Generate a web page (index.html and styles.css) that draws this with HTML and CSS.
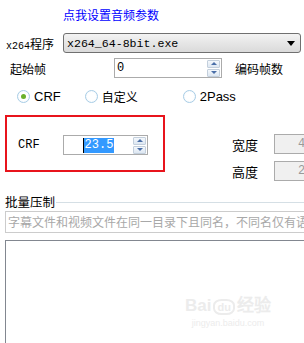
FILE: index.html
```html
<!DOCTYPE html>
<html lang="zh-CN">
<head>
    <meta charset="UTF-8">
    <meta name="viewport" content="width=device-width, initial-scale=1.0">
    <title>x264 压制设置</title>
    <link rel="stylesheet" href="styles.css">
</head>
<body>
    <div class="panel">
        <div class="row link-row">
            <a class="audio-link" href="#">点我设置音频参数</a>
        </div>

        <div class="row exe-row">
            <span class="label exe-label"><span class="mono">x264</span>程序</span>
            <div class="select">
                <span class="select-text">x264_64-8bit.exe</span>
                <span class="arrow"></span>
            </div>
        </div>

        <div class="row frame-row">
            <span class="label start-label">起始帧</span>
            <div class="spin frame-spin">
                <span class="spin-value">0</span>
                <div class="spin-btns">
                    <span class="spin-btn up"></span>
                    <span class="spin-btn down"></span>
                </div>
            </div>
            <span class="label count-label">编码帧数</span>
        </div>

        <div class="row mode-row">
            <label class="radio radio-crf"><span class="dot checked"></span>CRF</label>
            <label class="radio radio-custom"><span class="dot"></span>自定义</label>
            <label class="radio radio-pass"><span class="dot"></span>2Pass</label>
        </div>

        <div class="row crf-row">
            <div class="crf-box">
                <span class="crf-label">CRF</span>
                <div class="spin crf-spin">
                    <span class="spin-value center"><span class="selected">23.5</span></span>
                    <div class="spin-btns">
                        <span class="spin-btn up"></span>
                        <span class="spin-btn down"></span>
                    </div>
                </div>
            </div>
            <div class="size-col">
                <div class="size-row">
                    <span class="size-label">宽度</span>
                    <span class="size-box">4</span>
                </div>
                <div class="size-row">
                    <span class="size-label">高度</span>
                    <span class="size-box">2</span>
                </div>
            </div>
        </div>

        <div class="group-title">
            <span>批量压制</span>
            <span class="group-line"></span>
        </div>

        <div class="hint-input">字幕文件和视频文件在同一目录下且同名，不同名仅有语</div>

        <div class="list-box"></div>

        <div class="watermark">
            <div class="wm-top">Bai<span class="wm-du">du</span>经验</div>
            <div class="wm-url">jingyan.baidu.com</div>
        </div>
    </div>
</body>
</html>
```

FILE: styles.css
```css
* {
    margin: 0;
    padding: 0;
    box-sizing: border-box;
}

body {
    font-family: "Noto Sans CJK SC", "DejaVu Sans", sans-serif;
    font-size: 12px;
    color: #000;
    background: #fff;
    overflow: hidden;
}

.panel {
    position: relative;
    padding-top: 8px;
    width: 304px;
    height: 343px;
    overflow: hidden;
}

.row {
    display: flex;
    align-items: center;
    white-space: nowrap;
}

.row > * {
    flex-shrink: 0;
}

.mono {
    font-family: "Liberation Mono", monospace;
    font-size: 10px;
}

/* top link */
.link-row {
    height: 14px;
    padding-left: 63px;
    line-height: 14px;
}

.audio-link {
    color: #0000ff;
    text-decoration: none;
}

/* x264 exe select */
.exe-row {
    margin-top: 11px;
    height: 20px;
}

.exe-label {
    width: 63px;
    padding-left: 6px;
}

.select {
    width: 238px;
    height: 20px;
    border: 1px solid #707070;
    border-radius: 3px;
    background: linear-gradient(#f3f3f3, #e6e6e6 50%, #dadada);
    display: flex;
    align-items: center;
    padding-left: 3px;
}

.select-text {
    font-family: "Liberation Mono", monospace;
    font-size: 11.6px;
    flex: 1;
}

.arrow {
    width: 0;
    height: 0;
    border-left: 4px solid transparent;
    border-right: 4px solid transparent;
    border-top: 5px solid #000;
    margin-right: 5px;
}

/* start frame */
.frame-row {
    margin-top: 5px;
    height: 20px;
}

.start-label {
    width: 114px;
    padding-left: 10px;
}

.spin {
    height: 20px;
    border: 1px solid #ababab;
    background: #fff;
    display: flex;
    align-items: center;
}

.frame-spin {
    width: 108px;
}

.spin-value {
    flex: 1;
    font-family: "Liberation Mono", monospace;
    font-size: 12px;
    padding-left: 2px;
    display: flex;
}

.spin-value.center {
    justify-content: center;
    padding-left: 0;
}

.selected {
    background: #3399ff;
    color: #fff;
    border-left: 1px solid #000;
    padding: 0 1px;
    line-height: 15px;
}

.spin-btns {
    display: flex;
    flex-direction: column;
    gap: 1px;
    margin-right: 1px;
}

.spin-btn {
    width: 13px;
    height: 8px;
    border: 1px solid #c3cfdc;
    border-radius: 1px;
    background: linear-gradient(#f4f8fc, #dde7f2);
    display: flex;
    justify-content: center;
    align-items: center;
}

.spin-btn::after {
    content: "";
    border-left: 3px solid transparent;
    border-right: 3px solid transparent;
}

.spin-btn.up::after {
    border-bottom: 3px solid #4a6fa8;
}

.spin-btn.down::after {
    border-top: 3px solid #4a6fa8;
}

.count-label {
    margin-left: 13px;
}

/* encoding mode radios */
.mode-row {
    margin-top: 10px;
    height: 16px;
    font-family: "Liberation Sans", Arial, sans-serif;
    font-size: 13px;
}

.radio {
    display: flex;
    align-items: center;
    gap: 4px;
}

.radio-crf {
    margin-left: 17px;
}

.radio-custom {
    margin-left: 24px;
    font-family: "Noto Sans CJK SC", sans-serif;
    font-size: 12px;
}

.radio-pass {
    margin-left: 45px;
}

.dot {
    width: 13px;
    height: 13px;
    border-radius: 50%;
    border: 1px solid #a8cde6;
    background: radial-gradient(circle, #ffffff 50%, #eaf3fa);
    display: flex;
    justify-content: center;
    align-items: center;
}

.dot.checked::after {
    content: "";
    width: 5px;
    height: 5px;
    border-radius: 50%;
    background: #6ab02a;
}

/* CRF box and size */
.crf-row {
    margin-top: 11px;
    align-items: flex-start;
    height: 66px;
}

.crf-box {
    margin-left: 5px;
    width: 160px;
    height: 57px;
    border: 2px solid #e8141c;
    display: flex;
    align-items: flex-start;
    padding-top: 18px;
    padding-left: 11px;
}

.crf-label {
    width: 45px;
    font-family: "Liberation Mono", monospace;
    font-size: 12px;
    line-height: 20px;
}

.crf-spin {
    width: 85px;
}

.size-col {
    margin-left: 67px;
    margin-top: 19px;
    display: flex;
    flex-direction: column;
    gap: 7px;
}

.size-row {
    display: flex;
    align-items: center;
    height: 20px;
}

.size-label {
    width: 42px;
    font-size: 13px;
}

.size-box {
    width: 30px;
    height: 20px;
    border: 1px solid #ababab;
    border-right: none;
    background: #f0f0f0;
    color: #9a9a9a;
    padding-left: 23px;
    line-height: 18px;
    font-family: "Liberation Mono", monospace;
    overflow: hidden;
}

/* batch group */
.group-title {
    margin-top: 14px;
    margin-left: 5px;
    height: 14px;
    display: flex;
    align-items: center;
    font-size: 12.5px;
    line-height: 14px;
}

.group-line {
    flex: 1;
    height: 1px;
    background: #d5dfe5;
    margin-left: 1px;
    margin-top: 1px;
}

.hint-input {
    margin-top: 2px;
    margin-left: 5px;
    width: 299px;
    height: 22px;
    border: 1px solid #cccccc;
    border-right: none;
    color: #a8a8a8;
    padding-left: 2px;
    line-height: 20px;
    white-space: nowrap;
    overflow: hidden;
}

.list-box {
    margin-top: 7px;
    margin-left: 5px;
    width: 320px;
    height: 120px;
    border: 1px solid #828790;
}

/* faint watermark over the list */
.watermark {
    position: absolute;
    left: 185px;
    top: 296px;
    color: #ececec;
    font-family: "Liberation Sans", Arial, sans-serif;
    text-align: center;
}

.wm-top {
    font-size: 17px;
    font-weight: bold;
    line-height: 20px;
}

.wm-du {
    font-size: 11px;
    border: 2px solid #ececec;
    border-radius: 40%;
    padding: 0 2px;
    margin: 0 2px;
}

.wm-url {
    font-size: 9px;
    line-height: 12px;
}
```
